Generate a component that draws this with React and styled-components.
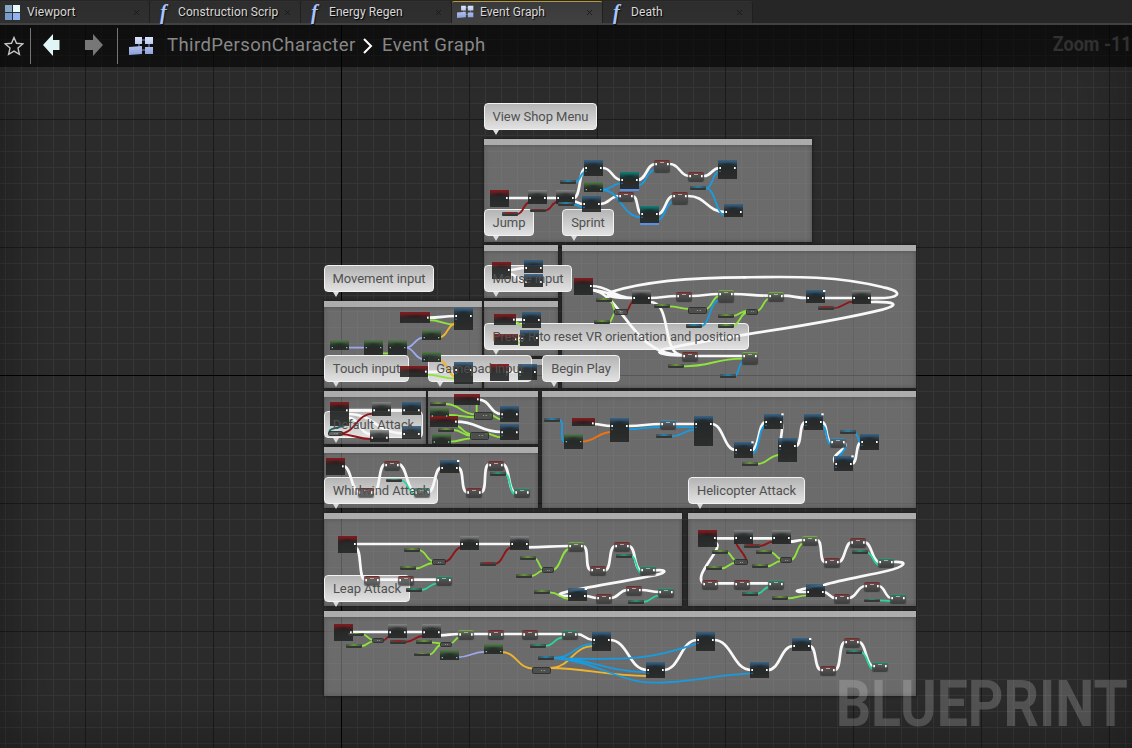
import React from "react";
import styled, { createGlobalStyle, css } from "styled-components";

const GlobalStyle = createGlobalStyle`
  * { box-sizing: border-box; }
  body { margin: 0; background: #282828; overflow: hidden; font-family: Roboto, "Liberation Sans", sans-serif; }
`;

/* ---------- window chrome ---------- */

const Editor = styled.main`
  display: flex;
  flex-direction: column;
  width: 1132px;
  height: 748px;
  overflow: hidden;
  background: #282828;
`;

const TabBar = styled.nav`
  display: flex;
  flex: none;
  height: 25px;
  padding-top: 1px;
  background: #262626;
  border-bottom: 2px solid #414141;
`;

const Tab = styled.div`
  display: flex;
  align-items: center;
  width: ${(p) => p.$width}px;
  padding: 0 9px 1px 5px;
  border-right: 1px solid #1f1f1f;
  border-top: 1px solid ${(p) => (p.$active ? "#b9992d" : "#303030")};
  border-radius: 2px 3px 0 0;
  background: ${(p) => (p.$active ? "linear-gradient(#3a3a3a, #414141)" : "linear-gradient(#2d2d2d, #303030)")};
  color: #d8d8d8;
  font-size: 12px;
  line-height: 20px;
  text-shadow: 1px 1px 1px #000;
  white-space: nowrap;
`;

const TabIcon = styled.span`
  display: flex;
  width: ${(p) => p.$width}px;
  flex: none;
`;

const TabLabel = styled.span`
  flex: 1;
  padding-bottom: 1px;
  letter-spacing: 0.08px;
`;

const Close = styled.svg`
  display: block;
  width: 7px;
  height: 7px;
  stroke: #191919;
  stroke-width: 0.9;
`;

const FunctionGlyph = styled.span`
  width: 20px;
  padding-left: 5px;
  font: italic bold 20px/19px "Liberation Serif", serif;
  color: #a9c4ff;
  text-shadow: 1px 1px 1px #111;
`;

const GraphPanel = styled.section`
  position: relative;
  display: flex;
  flex-direction: column;
  flex: 1;
  overflow: hidden;
  background: #2b2b2b;
`;

const Toolbar = styled.header`
  position: relative;
  z-index: 3;
  display: flex;
  align-items: center;
  flex: none;
  height: 42px;
  background: rgba(0, 0, 0, 0.58);
`;

const ToolCell = styled.div`
  display: flex;
  align-items: center;
  justify-content: ${(p) => (p.$spread ? "space-between" : "center")};
  width: ${(p) => p.$width}px;
  padding: ${(p) => p.$pad || "0"};
  height: 36px;
  border-right: ${(p) => (p.$divider ? "1px solid #757575" : "0")};
`;

const Crumb = styled.span`
  width: ${(p) => p.$width}px;
  margin-left: ${(p) => p.$gap}px;
  padding-bottom: 2px;
  color: #888;
  font-size: 18.5px;
  letter-spacing: ${(p) => p.$track}px;
  white-space: nowrap;
`;

const ZoomLabel = styled.span`
  margin-left: auto;
  padding-bottom: 5px;
  color: #313131;
  font-size: 20px;
  font-weight: 700;
  white-space: nowrap;
  transform: scaleX(0.9);
  transform-origin: right;
`;

/* ---------- free canvas ---------- */

const Canvas = styled.div`
  position: absolute;
  inset: 0;
`;

const Layer = styled.svg`
  position: absolute;
  inset: 0;
  width: 1132px;
  height: 723px;
  fill: none;
`;

const CommentBox = styled.div`
  position: absolute;
  left: ${(p) => p.$x}px;
  top: ${(p) => p.$y}px;
  width: ${(p) => p.$w}px;
  height: ${(p) => p.$h}px;
  border-top: 6px solid rgba(178, 178, 178, 0.93);
  background: rgba(165, 165, 165, 0.53);
  box-shadow: 0 0 2px 1px rgba(20, 20, 20, 0.55), inset 0 0 4px rgba(50, 50, 50, 0.5);
`;

const Bubble = styled.div`
  position: absolute;
  left: ${(p) => p.$x}px;
  top: ${(p) => p.$y}px;
  width: ${(p) => p.$w}px;
  height: 27px;
  border: 1px solid #f2f2f2;
  border-radius: 4px;
  background: linear-gradient(#b4b4b4, #e2e2e2);
  color: #505050;
  font-size: 13px;
  line-height: 25px;
  letter-spacing: -0.06px;
  text-align: center;
  white-space: nowrap;

  &::after {
    content: "";
    position: absolute;
    left: 8px;
    top: 26px;
    border: 3.5px solid transparent;
    border-top: 5px solid #dcdcdc;
    border-bottom: 0;
  }
`;

/* Captions stay readable above the nodes that cross their bubble. */
const BubbleText = styled.span`
  position: relative;
  z-index: 1;
`;

const headerColors = {
  event: "#8a1215",
  fn: "#356388",
  macro: "#8a8a8a",
  pure: "#4f7d48",
  cast: "#08807a",
};
const setColors = { red: "#7a2929", green: "#76a64c", teal: "#31916f", blue: "#3b86ad" };
const varColors = { vRed: "#8e2222", vGreen: "#67983a", vBlue: "#2383b0", vTeal: "#2b9274" };

const fullNode = css`
  background:
    radial-gradient(ellipse at 50% 60%, rgba(10, 14, 17, 0.5), transparent 70%) 0 2px / 100% 4px no-repeat,
    linear-gradient(${(p) => headerColors[p.$kind]}, rgba(22, 26, 27, 0.4)) 0 0 / 100% 7px no-repeat,
    linear-gradient(#1b1e1e, #252827);
  opacity: 0.9;
`;
const setNode = css`
  border-top: 1px solid ${(p) => setColors[p.$kind]};
  border-radius: 2px;
  background:
    linear-gradient(#aaa, #aaa) 50% 1px / 4px 1px no-repeat,
    linear-gradient(${(p) => setColors[p.$kind]}66, transparent 4px),
    linear-gradient(rgba(80, 80, 80, 0.7), rgba(48, 49, 49, 0.75));
  box-shadow: 0 1px 1px rgba(30, 30, 30, 0.6);
`;
const varNode = css`
  border-radius: 1px;
  background: linear-gradient(90deg, #484b48, ${(p) => varColors[p.$kind]} 50%, #454745);
  border-bottom: 2px solid #343734;
`;
const opNode = css`
  border: 1px solid rgba(45, 45, 45, 0.8);
  border-radius: 2px;
  background: linear-gradient(90deg, transparent 40%, #aaa 46%, transparent 54%, #999 72%, transparent 78%) 50% 50% / 80% 1px no-repeat, rgba(70, 72, 70, 0.8);
`;

const Node = styled.div`
  position: absolute;
  left: ${(p) => p.$x}px;
  top: ${(p) => p.$y}px;
  width: ${(p) => p.$w}px;
  height: ${(p) => p.$h}px;
  ${(p) => (p.$kind in headerColors ? fullNode : p.$kind in setColors ? setNode : p.$kind in varColors ? varNode : opNode)}
  ${(p) => p.$kind === "cast" && "border-bottom: 2px solid #5795f5;"}
`;

const Vignette = styled.div`
  position: absolute;
  inset: 0;
  z-index: 1;
  box-shadow: inset 0 0 60px rgba(0, 0, 0, 0.36);
`;

const Watermark = styled.div`
  position: absolute;
  z-index: 2;
  right: 4px;
  bottom: 6px;
  color: rgba(255, 255, 255, 0.19);
  font-size: 65px;
  font-weight: 700;
  line-height: 76px;
  transform: scaleX(0.852);
  transform-origin: right;
`;

const TOP = 25;
const comments = [
  [484, 139, 328, 103], [484, 245, 74, 53], [562, 245, 354, 143],
  [324, 301, 158, 87], [484, 301, 74, 55], [484, 359, 74, 29],
  [324, 391, 102, 53], [428, 391, 110, 53], [542, 391, 374, 117],
  [324, 447, 214, 61], [324, 513, 358, 93], [688, 513, 228, 93], [324, 611, 592, 85],
];

const bubbles = [
  ["View Shop Menu", 484, 103, 113], ["Jump", 484, 209, 50], ["Sprint", 562, 209, 52],
  ["Movement input", 324, 265, 110], ["Mouse input", 484, 265, 88],
  ["Press R to reset VR orientation and position", 484, 323, 265],
  ["Touch input", 324, 355, 85], ["Gamepad input", 428, 355, 104], ["Begin Play", 542, 355, 78],
  ["Default Attack", 324, 411, 99], ["Whirlwind Attack", 324, 477, 114],
  ["Helicopter Attack", 688, 477, 117], ["Leap Attack", 324, 575, 86],
];

/* Graph coordinates are stored in thirds of a pixel, relative to each group's origin.
   Wires are either [x1, y1, x2, y2] (automatic spline) or a path string. */
const groups = [
  {
    origin: [480, 95],
    nodes: {
      event: [[30, 285, 57, 50]],
      macro: [[144, 285, 57, 42], [228, 285, 57, 42]],
      fn: [[312, 195, 57, 48], [306, 303, 57, 48], [714, 195, 57, 57], [732, 327, 57, 39]],
      pure: [[312, 261, 57, 30]],
      cast: [[420, 231, 57, 57], [480, 333, 57, 57]],
      red: [[522, 195, 48, 35], [624, 231, 48, 26], [414, 291, 48, 26], [576, 291, 48, 35]],
      vBlue: [[240, 256], [234, 322], [630, 274]],
      vRed: [[66, 352], [150, 341]],
    },
    wires: {
      white: [[87, 309, 148, 309], [201, 309, 232, 309], [281, 309, 318, 219], [281, 320, 310, 327], [369, 219, 424, 255], [473, 255, 526, 207], [570, 207, 628, 243], [672, 243, 718, 219], [360, 327, 418, 303], [458, 303, 486, 357], [533, 357, 580, 303], [624, 303, 736, 351]],
      blue: [[286, 261, 316, 231], [280, 327, 310, 337], [365, 285, 424, 265], [365, 285, 484, 367], [473, 272, 526, 224], [533, 374, 580, 320], [678, 280, 718, 230], [678, 280, 736, 361]],
      red: [[112, 357, 150, 321], [196, 346, 232, 321]],
    },
  },
  {
    origin: [320, 240],
    nodes: {
      event: [[240, 217, 90, 32], [240, 379, 84, 32], [516, 66, 57, 50], [522, 223, 66, 32], [522, 282, 72, 32], [510, 372, 57, 50]],
      fn: [[402, 204, 57, 66], [402, 366, 57, 66], [612, 60, 57, 38], [612, 102, 57, 38], [606, 216, 57, 48], [600, 270, 57, 48], [594, 372, 57, 48]],
      pure: [[306, 270, 57, 30], [30, 300, 57, 30], [132, 300, 57, 45], [204, 300, 57, 45], [306, 336, 57, 30]],
    },
    wires: {
      white: [[324, 233, 408, 228], [320, 396, 408, 394], [565, 90, 616, 84], [567, 102, 616, 125], [582, 239, 612, 239], [588, 298, 606, 296], [563, 396, 598, 396]],
      lime: [[324, 240, 408, 254], [318, 404, 408, 416], [180, 340, 210, 340], [582, 245, 612, 257], [588, 305, 606, 311]],
      violet: [[83, 323, 138, 323], [257, 323, 310, 293], [257, 323, 310, 357]],
      yellow: [[358, 292, 408, 250], [358, 361, 408, 410]],
    },
  },
  {
    origin: [550, 240],
    nodes: {
      event: [[72, 114, 57, 50]],
      macro: [[246, 150, 57, 42], [906, 150, 57, 42]],
      fn: [[768, 150, 57, 39]],
      red: [[378, 156, 48, 26], [396, 336, 48, 26]],
      green: [[504, 150, 48, 35], [654, 156, 48, 26], [576, 336, 48, 35]],
      vGreen: [[138, 175], [132, 240], [312, 193], [504, 223], [504, 253], [354, 373]],
      vBlue: [[408, 253], [510, 403]],
      vRed: [[804, 199]],
      op: [[192, 206, 42, 18], [414, 200, 57, 22], [588, 206, 36, 18]],
    },
    wires: {
      white: [
        "M124 138C180 138 190 174 250 174", "M124 150C175 150 180 174 250 174",
        "M124 150C220 160 240 346 400 346", "M299 186C370 186 330 346 400 346",
        [299, 174, 382, 168], [422, 168, 508, 162], [548, 162, 658, 167], [698, 167, 772, 174], [821, 174, 910, 174],
        "M959 174C1055 178 1065 155 1000 142C860 106 720 110 583 112C420 112 280 126 185 155C155 168 190 174 250 174",
        "M959 186C1038 184 1050 194 1000 208C880 238 740 260 590 283C500 297 400 315 340 328C305 338 350 348 400 346",
        [439, 348, 580, 348],
      ],
      lime: [[180, 181, 198, 213], [176, 247, 198, 217], [356, 199, 420, 207], [465, 208, 508, 168], [546, 228, 594, 212], [546, 258, 594, 216], [620, 213, 658, 176], [398, 379, 580, 356]],
      blue: [[452, 258, 508, 180], [553, 409, 580, 364]],
      red: [[228, 213, 250, 185], [848, 205, 912, 185]],
    },
    markers: [[583, 112], [822, 153]],
  },
  {
    origin: [320, 385],
    nodes: {
      event: [[30, 52, 57, 70], [402, 27, 78, 33], [330, 94, 84, 32], [18, 220, 57, 50]],
      macro: [[156, 52, 57, 42], [150, 134, 57, 38]],
      fn: [[246, 52, 57, 38], [246, 123, 57, 40], [540, 64, 57, 48], [540, 118, 57, 48], [360, 225, 57, 39]],
      pure: [[330, 70, 57, 24], [336, 148, 57, 30]],
      red: [[192, 228, 48, 26], [504, 228, 48, 26], [438, 310, 48, 26], [114, 310, 48, 26]],
      teal: [[282, 310, 48, 26], [582, 310, 48, 26]],
      vGreen: [[330, 52], [354, 130]],
      vTeal: [[198, 281], [510, 262]],
      op: [[24, 138, 45, 16], [462, 80, 57, 24], [450, 140, 57, 24]],
    },
    wires: {
      white: [[83, 87, 250, 145], [83, 75, 160, 75], [83, 98, 154, 148], [209, 75, 250, 75], [476, 44, 545, 87], [408, 110, 545, 141], [70, 243, 118, 322], [160, 322, 196, 238], [236, 238, 286, 322], [324, 322, 364, 248], [413, 248, 442, 322], [482, 322, 508, 238], [548, 238, 586, 322]],
      lime: [[376, 57, 468, 88], [383, 90, 468, 97], "M470 55V84", [400, 120, 455, 148], [400, 135, 455, 153], [390, 170, 455, 160], [510, 90, 545, 103], [495, 145, 545, 157]],
      red: [[55, 147, 160, 86], [55, 147, 155, 162]],
      darkTeal: ["M80 115C80 130 20 125 30 143"],
      teal: [[244, 286, 286, 328], [554, 267, 586, 328]],
    },
    markers: [[414, 228]],
  },
  {
    origin: [535, 385],
    nodes: {
      event: [[111, 99, 69, 24]],
      fn: [[225, 99, 57, 72], [477, 93, 57, 90], [597, 171, 57, 48], [687, 87, 57, 45], [729, 159, 57, 72], [807, 87, 57, 48], [975, 147, 57, 48], [897, 213, 57, 45]],
      pure: [[87, 147, 57, 45]],
      blue: [[375, 105, 48, 27], [885, 159, 48, 27]],
      vBlue: [[26, 99], [363, 148], [915, 136]],
      vGreen: [[621, 232]],
    },
    wires: {
      white: [[174, 117, 230, 123], [278, 123, 380, 117], [419, 117, 482, 117], [530, 117, 602, 195], [650, 195, 692, 111], "M738 111C748 125 735 160 735 183", [781, 183, 812, 111], [860, 111, 890, 172], "M928 172C945 195 880 205 902 236", [950, 236, 980, 171]],
      blue: [[72, 105, 90, 170], [272, 133, 380, 126], [419, 126, 482, 127], [409, 154, 482, 134], [652, 205, 692, 122], [860, 121, 890, 180], "M928 180C938 190 920 200 908 220", [958, 142, 980, 175]],
      orange: [[138, 170, 232, 141]],
      lime: [[665, 237, 735, 210]],
    },
    markers: [[652, 172], [742, 88], [862, 88], [952, 214]],
  },
  {
    origin: [320, 475],
    nodes: {
      event: [[54, 183, 57, 50]],
      macro: [[420, 183, 57, 42], [570, 183, 57, 42]],
      fn: [[744, 339, 57, 39]],
      red: [[132, 303, 48, 26], [234, 303, 48, 26], [810, 273, 48, 26], [882, 201, 48, 26], [828, 357, 48, 26], [918, 333, 48, 26]],
      teal: [[348, 303, 48, 26], [960, 273, 48, 26], [1014, 339, 48, 26]],
      green: [[744, 201, 48, 26]],
      vGreen: [[252, 219], [240, 274], [600, 244], [588, 298], [642, 346]],
      vTeal: [[258, 340], [888, 238], [924, 376]],
      vRed: [[480, 262]],
      op: [[336, 253, 42, 18], [666, 276, 36, 18]],
    },
    wires: {
      white: [[105, 207, 425, 207], [473, 207, 574, 207], [621, 217, 748, 213], [105, 218, 136, 314], [176, 314, 238, 314], [276, 314, 352, 314], [788, 213, 814, 286], [854, 286, 886, 213], [926, 213, 964, 286], "M1002 286C1050 282 1040 296 985 304C920 318 850 328 790 340C700 356 705 363 748 363", [796, 363, 832, 369], [872, 369, 922, 345], [964, 345, 1018, 351]],
      lime: [[298, 226, 340, 258], [286, 280, 340, 264], [644, 250, 670, 282], [634, 303, 670, 287], [698, 284, 748, 222], [688, 352, 750, 372]],
      red: [[373, 260, 426, 216], [524, 267, 576, 217]],
      teal: [[304, 345, 352, 325], [934, 243, 964, 294], [970, 381, 1018, 361]],
    },
    markers: [[797, 342]],
  },
  {
    origin: [680, 475],
    nodes: {
      event: [[54, 165, 57, 50]],
      macro: [[162, 165, 57, 42], [276, 165, 57, 42]],
      fn: [[378, 327, 57, 39]],
      red: [[66, 315, 48, 26], [162, 315, 48, 26], [432, 249, 48, 26], [510, 190, 48, 26], [462, 357, 48, 26], [552, 321, 48, 26]],
      teal: [[264, 315, 48, 26], [594, 249, 48, 26], [630, 357, 48, 26]],
      green: [[366, 183, 48, 26]],
      vGreen: [[96, 226], [78, 274], [228, 226], [216, 268], [276, 364]],
      vTeal: [[186, 352], [516, 226], [552, 371]],
      vRed: [[192, 208]],
      op: [[162, 252, 42, 18], [300, 246, 36, 18]],
    },
    wires: {
      white: [[105, 190, 166, 190], [214, 190, 280, 190], [327, 200, 370, 195], "M105 202C140 215 35 300 70 325", [108, 325, 166, 325], [206, 325, 268, 325], [410, 195, 436, 261], [476, 261, 514, 202], [554, 202, 598, 261], "M638 261C690 258 675 275 620 288C560 302 480 315 432 330C340 346 330 351 382 351", [430, 351, 466, 369], [506, 369, 556, 333], [596, 333, 634, 369]],
      lime: [[140, 232, 168, 256], [124, 280, 168, 263], [272, 232, 304, 252], [260, 274, 304, 258], [332, 255, 370, 205], [320, 370, 384, 361]],
      red: ["M192 261C215 255 165 215 168 200", [236, 213, 282, 200]],
      teal: [[230, 357, 268, 336], [560, 232, 598, 270], [596, 376, 634, 378]],
    },
    markers: [[432, 330]],
  },
  {
    origin: [320, 575],
    nodes: {
      event: [[42, 148, 57, 50]],
      macro: [[204, 148, 57, 42], [306, 148, 57, 42]],
      fn: [[816, 171, 57, 57], [978, 261, 57, 48], [1128, 171, 57, 57], [1290, 261, 57, 48], [1416, 189, 57, 39]],
      pure: [[360, 225, 57, 30], [492, 207, 57, 30]],
      red: [[504, 166, 48, 26], [606, 166, 48, 26], [1500, 273, 48, 26], [1572, 189, 48, 26]],
      teal: [[726, 166, 48, 26], [1656, 261, 48, 26]],
      green: [[414, 166, 48, 26]],
      vGreen: [[84, 173], [78, 208], [288, 196], [282, 233]],
      vTeal: [[630, 208], [1578, 225]],
      vBlue: [[654, 244]],
      vRed: [[210, 196]],
      op: [[156, 188, 36, 16], [360, 200, 36, 16], [636, 275, 57, 22]],
    },
    wires: {
      white: [[92, 171, 208, 171], [257, 171, 310, 171], [358, 181, 418, 177], [458, 177, 508, 177], [548, 177, 610, 177], [650, 177, 730, 177], [770, 177, 820, 195], [869, 195, 982, 285], [1030, 285, 1132, 195], [1181, 195, 1294, 285], [1343, 285, 1420, 213], [1469, 213, 1504, 285], [1544, 285, 1576, 201], [1616, 201, 1660, 273]],
      lime: [[128, 179, 160, 195], [124, 213, 160, 199], [334, 202, 364, 205], [328, 238, 364, 210], [392, 205, 418, 187]],
      red: [[188, 197, 210, 184], [256, 201, 310, 183]],
      teal: [[676, 213, 730, 187], [1624, 232, 1660, 282]],
      violet: [[410, 247, 498, 230]],
      yellow: [[543, 231, 640, 281], [688, 279, 822, 213], "M688 279C800 280 860 302 982 303"],
      blue: [[700, 249, 822, 207], "M700 249C820 251 850 288 982 292", "M700 250C920 254 980 258 1132 205", "M700 249C820 260 860 300 960 320C1060 333 1180 299 1294 295"],
    },
    markers: [[1470, 192]],
  },
];

const wireColors = {
  white: "#f8f8f8", blue: "#189be0", red: "#8f1518", lime: "#8fe33c", violet: "#9ca8ef",
  yellow: "#efb52e", teal: "#27d6a0", darkTeal: "#0a6c64", orange: "#ef7310",
};

const toPath = (w) => {
  if (typeof w === "string") return w;
  const [x1, y1, x2, y2] = w;
  const k = Math.max(Math.abs(x2 - x1) * 0.5, Math.min(Math.abs(y2 - y1) * 0.32, 23));
  return `M${x1} ${y1}C${x1 + k} ${y1} ${x2 - k} ${y2} ${x2} ${y2}`;
};

const viewBox = `0 ${TOP} 1132 723`;

const lines = (start, step, end) => {
  const out = [];
  for (let v = start; v < end; v += step) out.push(v);
  return out;
};

function Grid() {
  return (
    <Layer viewBox={viewBox} shapeRendering="crispEdges">
      <path stroke="#363636" d={lines(5.5, 16, 1132).map((x) => `M${x} 25V748`).join("") + lines(39.5, 16, 748).map((y) => `M0 ${y}H1132`).join("")} />
      <path stroke="#1b1b1b" d={lines(85.5, 128, 1132).map((x) => `M${x} 25V748`).join("") + lines(119.5, 128, 748).map((y) => `M0 ${y}H1132`).join("")} />
      <path stroke="#000" d="M341.5 25V748M0 375.5H1132" />
    </Layer>
  );
}

function Wires() {
  return (
    <Layer viewBox={viewBox}>
      {groups.map(({ origin, wires }) => (
        <g key={origin.join()} transform={`translate(${origin[0]} ${origin[1]}) scale(.33333)`}>
          {Object.entries(wires).map(([color, list]) => (
            <path key={color} stroke={wireColors[color]} strokeWidth={color === "white" ? 8 : 5.5} d={list.map(toPath).join("")} />
          ))}
        </g>
      ))}
    </Layer>
  );
}

/* Exec and data pins, drawn over the node bodies. */
function Pins() {
  return (
    <Layer viewBox={viewBox}>
      {groups.map(({ origin, nodes, markers = [] }) => (
        <g key={origin.join()} transform={`translate(${origin[0]} ${origin[1]}) scale(.33333)`}>
          {Object.entries(nodes).flatMap(([kind, list]) =>
            list.map(([x, y, w = 48, h = 11]) => {
              const key = `${kind}${x}-${y}`;
              if (kind === "event") {
                const low = h < 40;
                return <path key={key} fill="#fff" d={`M${x + w - 9} ${y + (low ? 13 : 21)}h5v6h-5z`} />;
              }
              if (kind === "fn" || kind === "macro" || kind === "cast") {
                return (
                  <g key={key}>
                    <path fill="#fff" d={`M${x + 4} ${y + 21}h5v6h-5zM${x + w - 9} ${y + 21}h5v6h-5z`} />
                    {kind !== "macro" && h > 42 && <path fill="#1e80b2" d={`M${x + 4} ${y + 32}h4v4h-4z`} />}
                  </g>
                );
              }
              if (kind === "pure") return <path key={key} fill="#7dcba3" d={`M${x + 5} ${y + 21}h4v4h-4zM${x + w - 9} ${y + 21}h4v4h-4z`} />;
              if (kind in setColors) return <path key={key} fill="#fff" d={`M${x + 4} ${y + 9}h5v7h-5zM${x + w - 9} ${y + 9}h5v7h-5z`} />;
              return null;
            })
          )}
          {markers.map(([x, y]) => <rect key={`${x}-${y}`} x={x - 3} y={y - 3} width="7" height="6" fill="#fff" />)}
        </g>
      ))}
    </Layer>
  );
}

function GraphIcon({ size }) {
  return (
    <svg width={size} height={size * 0.78} viewBox="0 0 25 19.5">
      <defs>
        <linearGradient id="tile" x2="0" y2="1"><stop stopColor="#dce5fb" /><stop offset="1" stopColor="#8a9edb" /></linearGradient>
      </defs>
      <path d="M12 4h5M12 14h5M20 7v6M10 7v4" stroke="#8796c4" />
      <path fill="url(#tile)" d="M6 1h7v7H6zM16 1h8v7h-8zM0 11l13-1v8L0 19zM16 11h8v7h-8z" />
    </svg>
  );
}

function ViewportIcon() {
  return (
    <svg width="15" height="15" viewBox="0 0 15 15">
      <path fill="#88a9c6" d="M0 0h7v7H0z" /><path fill="#e7fbff" d="M8 0h7v7H8z" />
      <path fill="#789acf" d="M0 8h7v7H0z" /><path fill="#91b3ef" d="M8 8h7v7H8z" />
    </svg>
  );
}

const tabs = [
  { label: "Viewport", width: 150, icon: "viewport" },
  { label: "Construction Scrip", width: 151, icon: "function" },
  { label: "Energy Regen", width: 151, icon: "function" },
  { label: "Event Graph", width: 151, icon: "graph", active: true },
  { label: "Death", width: 150, icon: "function" },
];

function EditorTab({ label, width, icon, active }) {
  return (
    <Tab $width={width} $active={active}>
      <TabIcon $width={icon === "viewport" ? 22 : 23}>
        {icon === "viewport" && <ViewportIcon />}
        {icon === "graph" && <GraphIcon size={17} />}
        {icon === "function" && <FunctionGlyph>f</FunctionGlyph>}
      </TabIcon>
      <TabLabel>{label}</TabLabel>
      <Close viewBox="0 0 7 7"><path d="M1 1l5 5M6 1L1 6" /></Close>
    </Tab>
  );
}

export default function App() {
  return (
    <Editor>
      <GlobalStyle />
      <TabBar>{tabs.map((t) => <EditorTab key={t.label} {...t} />)}</TabBar>
      <GraphPanel>
        <Canvas>
          <Grid />
          {comments.map(([x, y, w, h]) => <CommentBox key={`${x}-${y}`} $x={x} $y={y - TOP} $w={w} $h={h} />)}
          {bubbles.map(([text, x, y, w]) => (
            <Bubble key={text} $x={x} $y={y - TOP} $w={w}><BubbleText>{text}</BubbleText></Bubble>
          ))}
          <Wires />
          {groups.map(({ origin: [ox, oy], nodes }) =>
            Object.entries(nodes).flatMap(([kind, list]) =>
              list.map(([x, y, w = 48, h = 11]) => (
                <Node key={`${ox}-${oy}-${kind}-${x}-${y}`} $kind={kind} $x={ox + x / 3} $y={oy - TOP + y / 3} $w={w / 3} $h={h / 3} />
              ))
            )
          )}
          <Pins />
        </Canvas>
        <Toolbar>
          <ToolCell $width={31} $divider $pad="0 3px 0 0">
            <svg width="20" height="20" viewBox="0 0 20 20" fill="none" stroke="#c5c5c5" strokeWidth="1.4">
              <path d="M10 1.5l2.5 5.8 6.2.6-4.7 4.2 1.4 6.2-5.4-3.2-5.4 3.2L6 12.1 1.3 7.9l6.2-.6z" />
            </svg>
          </ToolCell>
          <ToolCell $width={87} $divider $spread $pad="0 14px 3px 12px">
            <svg width="17" height="22" viewBox="0 0 17 22"><path fill="#e0f5f5" d="M0 11L10 0v6h6.5v10H10v6z" /></svg>
            <svg width="18" height="22" viewBox="0 0 18 22"><path fill="#777" d="M18 11L8 0v6H0v10h8v6z" /></svg>
          </ToolCell>
          <ToolCell $width={49} $pad="0 2px 0 0"><GraphIcon size={25} /></ToolCell>
          <Crumb $width={189} $gap={0} $track={0.42}>ThirdPersonCharacter</Crumb>
          <ToolCell $width={24}>
            <svg width="10" height="16" viewBox="0 0 10 16" fill="none" stroke="#fff" strokeWidth="2"><path d="M1 1l7 7-7 7" /></svg>
          </ToolCell>
          <Crumb $width={110} $gap={2} $track={0.42}>Event Graph</Crumb>
          <ZoomLabel>Zoom -11</ZoomLabel>
        </Toolbar>
        <Vignette />
        <Watermark>BLUEPRINT</Watermark>
      </GraphPanel>
    </Editor>
  );
}
